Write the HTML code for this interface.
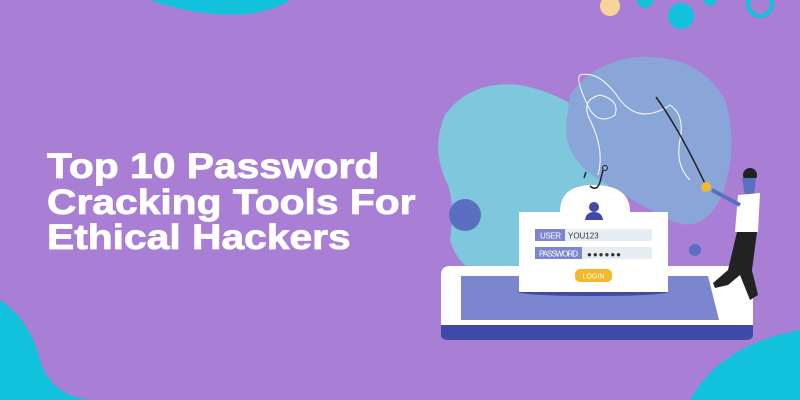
<!DOCTYPE html>
<html><head><meta charset="utf-8"><style>
html,body{margin:0;padding:0}
body{width:800px;height:400px;overflow:hidden;background:#a97fd6;position:relative;font-family:"Liberation Sans",sans-serif}
h1{position:absolute;left:47px;top:149px;margin:0;color:#fff;font-size:35px;line-height:35.5px;font-weight:bold;letter-spacing:0px;transform:scaleX(1.165);transform-origin:left top;-webkit-text-stroke:0.8px #fff}
svg{position:absolute;left:0;top:0}
</style></head><body>
<svg width="800" height="400" viewBox="0 0 800 400">
<path d="M150 0 Q200 18 250 14 Q280 8 290 0 Z" fill="#12c2dc"/>
<path d="M0 300 Q30 320 40 360 Q50 395 90 400 L0 400 Z" fill="#12c2dc"/>
<path d="M690 400 Q720 345 800 330 L800 400 Z" fill="#12c2dc"/>
<circle cx="610" cy="6" r="10" fill="#f6d49a"/>
<circle cx="681" cy="16" r="13" fill="#12c2dc"/>
<circle cx="645" cy="0" r="8" fill="#12c2dc"/>
<circle cx="760" cy="4" r="12" fill="none" stroke="#12c2dc" stroke-width="4"/>
<circle cx="710" cy="0" r="6" fill="#12c2dc"/>
<path d="M445 115 Q470 80 520 85 Q570 95 595 125 Q620 170 600 215 Q580 270 500 280 Q460 275 450 240 Q455 205 448 185 Q430 150 445 115 Z" fill="#7fc7dd"/>
<path d="M570 95 Q595 60 640 57 Q700 55 725 100 Q740 150 720 200 Q700 235 670 220 Q630 200 600 180 Q565 160 566 125 Z" fill="#8aa6d8"/>
<circle cx="465" cy="215" r="16" fill="#5a6fc0"/>
<circle cx="695" cy="250" r="6" fill="#5a6fc0"/>
<path d="M441 275 Q441 266 450 266 L745 266 Q753 266 753 275 L753 330 L441 330 Z" fill="#fff"/>
<path d="M461 276 L708 276 L719 320 L461 320 Z" fill="#7b86cf"/>
<path d="M441 325 L753 325 L753 335 Q753 340 745 340 L449 340 Q441 340 441 335 Z" fill="#3f4aa8"/>
<ellipse cx="593" cy="292" rx="75" ry="4" fill="#3f4aa8"/>
<path d="M519 212 L560 212 Q560 185 593 185 Q630 185 630 212 L668 212 L668 292 L519 292 Z" fill="#fff"/>
<circle cx="594" cy="207" r="5" fill="#3f4aa8"/>
<path d="M585 220 Q586 212 594 212 Q602 212 603 220 Z" fill="#3f4aa8"/>
<rect x="535" y="229" width="117" height="12" fill="#e6eef3"/>
<rect x="535" y="229" width="30" height="12" fill="#7b86cf"/>
<text x="540" y="238.5" font-size="8" fill="#fff" textLength="21">USER</text>
<text x="568" y="238.5" font-size="8" fill="#333">YOU123</text>
<rect x="535" y="247" width="117" height="12" fill="#e6eef3"/>
<rect x="535" y="247" width="47" height="12" fill="#7b86cf"/>
<text x="539" y="256.5" font-size="8" fill="#fff" textLength="39">PASSWORD</text>
<text x="587" y="257" font-size="8" fill="#333" letter-spacing="1">●●●●●●</text>
<rect x="575" y="269" width="37" height="13" rx="5" fill="#f4b82c"/>
<text x="593.5" y="278.5" font-size="7" fill="#fff" text-anchor="middle">LOGIN</text>
<path d="M598 175 Q605 150 590 120 Q580 100 600 95 Q620 100 615 115 Q600 125 590 110 Q575 80 580 75 Q600 70 620 100 Q640 125 670 105 Q685 115 680 140 Q675 165 690 180" fill="none" stroke="#fff" stroke-width="1"/>
<path d="M656 97 Q680 130 708 190" fill="none" stroke="#222" stroke-width="1.5"/>
<circle cx="706" cy="187" r="5" fill="#f4b82c"/>
<circle cx="605" cy="168" r="2.5" fill="none" stroke="#222" stroke-width="1"/>
<path d="M603 170 L600 182 Q597 192 590 186" fill="none" stroke="#222" stroke-width="1.5"/>
<path d="M586 172 L584 178" stroke="#222" stroke-width="1.5"/>
<circle cx="750" cy="175" r="7" fill="#222"/>
<path d="M742 178 L756 178 L754 195 L745 195 Z" fill="#5a6fc0"/>
<path d="M738 195 L760 193 L758 232 L735 232 Z" fill="#fff"/>
<path d="M712 190 L740 205" stroke="#5a6fc0" stroke-width="4"/>
<path d="M737 232 L757 232 L752 270 L758 295 L750 300 L740 275 L728 285 L715 288 L713 283 L728 270 Z" fill="#222"/>
</svg>
<h1>Top 10 Password<br>Cracking Tools For<br>Ethical Hackers</h1>
</body></html>
